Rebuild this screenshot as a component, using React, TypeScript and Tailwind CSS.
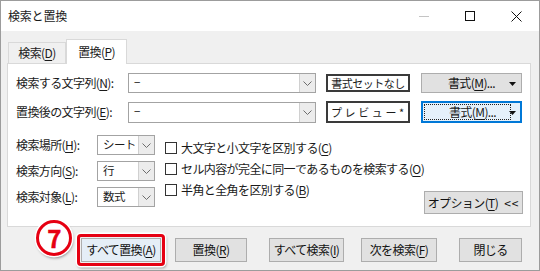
import React from 'react';

const FONT = "font-['Noto_Sans_CJK_JP','Noto_Sans',sans-serif]";

// ニーモニック文字（下線付き）
const U = ({ c }: { c: string }) => <span className="underline underline-offset-[2px]">{c}</span>;

const Chevron = () => (
  <svg width="9" height="5" viewBox="0 0 9 5" fill="none">
    <polyline points="0.5,0.5 4.5,4.5 8.5,0.5" stroke="#6d6d6d" strokeWidth="1" />
  </svg>
);

const Caret = () => (
  <svg width="7" height="4" viewBox="0 0 7 4">
    <polygon points="0,0 7,0 3.5,4" fill="#111" />
  </svg>
);

function Combo({ value, w, h }: { value: string; w: string; h: string }) {
  return (
    <div className={`flex ${w} ${h} bg-white border border-[#a3a3a3]`}>
      <div className="flex-1 flex items-center pl-[5px] text-[11.5px] leading-none overflow-hidden">{value}</div>
      <div className="w-[16px] shrink-0 flex items-center justify-center bg-[#ececec] border-l border-[#d0d0d0]">
        <Chevron />
      </div>
    </div>
  );
}

function Btn({ children, className = '' }: { children: React.ReactNode; className?: string }) {
  return (
    <div
      className={`flex items-center justify-center bg-[#e1e1e1] border border-[#adadad] text-[12px] leading-none text-[#111] ${className}`}
    >
      {children}
    </div>
  );
}

function Check({ children }: { children: React.ReactNode }) {
  return (
    <div className="flex items-center h-[21px] gap-[4px]">
      <div className="w-[12px] h-[12px] border border-[#333] bg-white" />
      <span className="text-[12px] leading-none">{children}</span>
    </div>
  );
}

export default function App() {
  return (
    <div
      className={`w-[540px] h-[271px] overflow-hidden whitespace-nowrap tracking-[-0.6px] bg-[#f0f0f0] border border-[#9c9c9c] text-[#1a1a1a] ${FONT}`}
    >
      {/* タイトルバー */}
      <div className="flex items-center h-[30px] bg-white">
        <span className="pl-[7px] text-[12px] leading-none tracking-[-0.2px]">検索と置換</span>
        <div className="ml-auto flex h-full">
          <div className="w-[46px] flex items-center justify-center">
            <div className="w-[10px] h-px bg-[#c4c4c4]" />
          </div>
          <div className="w-[46px] flex items-center justify-center">
            <div className="w-[10px] h-[10px] border border-[#111]" />
          </div>
          <div className="w-[46px] flex items-center justify-center">
            <svg width="11" height="11" viewBox="0 0 11 11">
              <path d="M0.5 0.5 L10.5 10.5 M10.5 0.5 L0.5 10.5" stroke="#111" strokeWidth="1" />
            </svg>
          </div>
        </div>
      </div>

      <div className="px-[6px] pt-[7px]">
        {/* タブ */}
        <div className="flex items-end h-[25px] pl-[1px]">
          <div className="w-[58px] h-[21px] flex items-center justify-center bg-[#f0f0f0] border border-b-0 border-[#d9d9d9] text-[12px] leading-none">
            検索(<U c="D" />)
          </div>
          <div className="relative z-10 -mb-px w-[61px] h-[25px] flex items-center justify-center bg-white border border-b-0 border-[#d9d9d9] text-[12px] leading-none">
            置換(<U c="P" />)
          </div>
        </div>

        {/* パネル */}
        <div className="w-[524px] h-[164px] bg-white border border-[#d9d9d9] pl-[8px] pr-[7px] pt-[9px]">
          <div className="flex items-center h-[20px]">
            <span className="w-[112px] text-[12px] leading-none">検索する文字列(<U c="N" />):</span>
            <Combo value="−" w="w-[188px]" h="h-[20px]" />
            <div className="ml-[10px] w-[84px] h-[18px] flex items-center justify-center border-2 border-[#3a3a3a] text-[11px] leading-none tracking-[-0.5px]">
              書式セットなし
            </div>
            <Btn className="relative ml-[11px] w-[101px] h-[20px]">
              書式(<U c="M" />)...
              <span className="absolute right-[5px] top-[8px] flex"><Caret /></span>
            </Btn>
          </div>

          <div className="flex items-center h-[22px] mt-[8px]">
            <span className="w-[112px] text-[12px] leading-none">置換後の文字列(<U c="E" />):</span>
            <Combo value="−" w="w-[188px]" h="h-[21px]" />
            <div className="ml-[10px] w-[84px] h-[22px] flex items-center pl-[3px] border-2 border-[#3a3a3a] text-[11px] leading-none tracking-[2.6px]">
              プレビュー*
            </div>
            <div className="relative ml-[11px] w-[101px] h-[22px] flex items-center bg-[#e5f1fb] border-2 border-[#0078d7] text-[12px] leading-none">
              <div className="ml-[1px] w-[87px] h-[16px] flex items-center justify-center border border-dotted border-[#222] pl-[10px]">
                書式(<U c="M" />)...
              </div>
              <span className="absolute right-[4px] top-[8px] flex"><Caret /></span>
            </div>
          </div>

          <div className="flex mt-[12px]">
            <div className="flex flex-col gap-[6px]">
              {[
                ['検索場所', 'H', 'シート'],
                ['検索方向', 'S', '行'],
                ['検索対象', 'L', '数式'],
              ].map(([l, k, v]) => (
                <div key={k} className="flex items-center h-[20px]">
                  <span className="w-[81px] text-[12px] leading-none">
                    {l}(<U c={k} />):
                  </span>
                  <Combo value={v} w="w-[58px]" h="h-[20px]" />
                </div>
              ))}
            </div>
            <div className="ml-[10px] mt-[2px] flex flex-col">
              <Check>大文字と小文字を区別する(<U c="C" />)</Check>
              <Check>セル内容が完全に同一であるものを検索する(<U c="O" />)</Check>
              <Check>半角と全角を区別する(<U c="B" />)</Check>
            </div>
            <Btn className="ml-auto mt-[56px] w-[101px] h-[23px]">
              オプション(<U c="T" />)<span className="ml-[6px] tracking-[1px]">&lt;&lt;</span>
            </Btn>
          </div>
        </div>

        {/* 下部ボタン */}
        <div className="flex mt-[11px] h-[24px]">
          <div className="relative ml-[74px]">
            <div className="absolute -left-[45px] -top-[18px] w-[36px] h-[36px] rounded-full bg-white border-[3px] border-[#e60012] shadow-[0_0_0_1.5px_#fff,1px_2px_3px_rgba(0,0,0,0.45)] flex items-center justify-center">
              <span className="text-[#e60012] text-[24px] font-bold leading-none [-webkit-text-stroke:0.5px_#e60012]">7</span>
            </div>
            <div className="absolute -inset-[4px] rounded-[4px] border-[3px] border-[#e60012] shadow-[0_0_0_1.5px_#fff,1px_2px_3px_rgba(0,0,0,0.45)]" />
            <Btn className="w-[80px] h-[24px] bg-[#e5eef7]">
              すべて置換(<U c="A" />)
            </Btn>
          </div>
          <Btn className="ml-[14px] w-[72px] h-[24px]">置換(<U c="R" />)</Btn>
          <Btn className="ml-[22px] w-[75px] h-[24px]">すべて検索(<U c="I" />)</Btn>
          <Btn className="ml-[17px] w-[76px] h-[24px]">次を検索(<U c="F" />)</Btn>
          <Btn className="ml-[22px] w-[63px] h-[24px]">閉じる</Btn>
        </div>
      </div>
    </div>
  );
}
